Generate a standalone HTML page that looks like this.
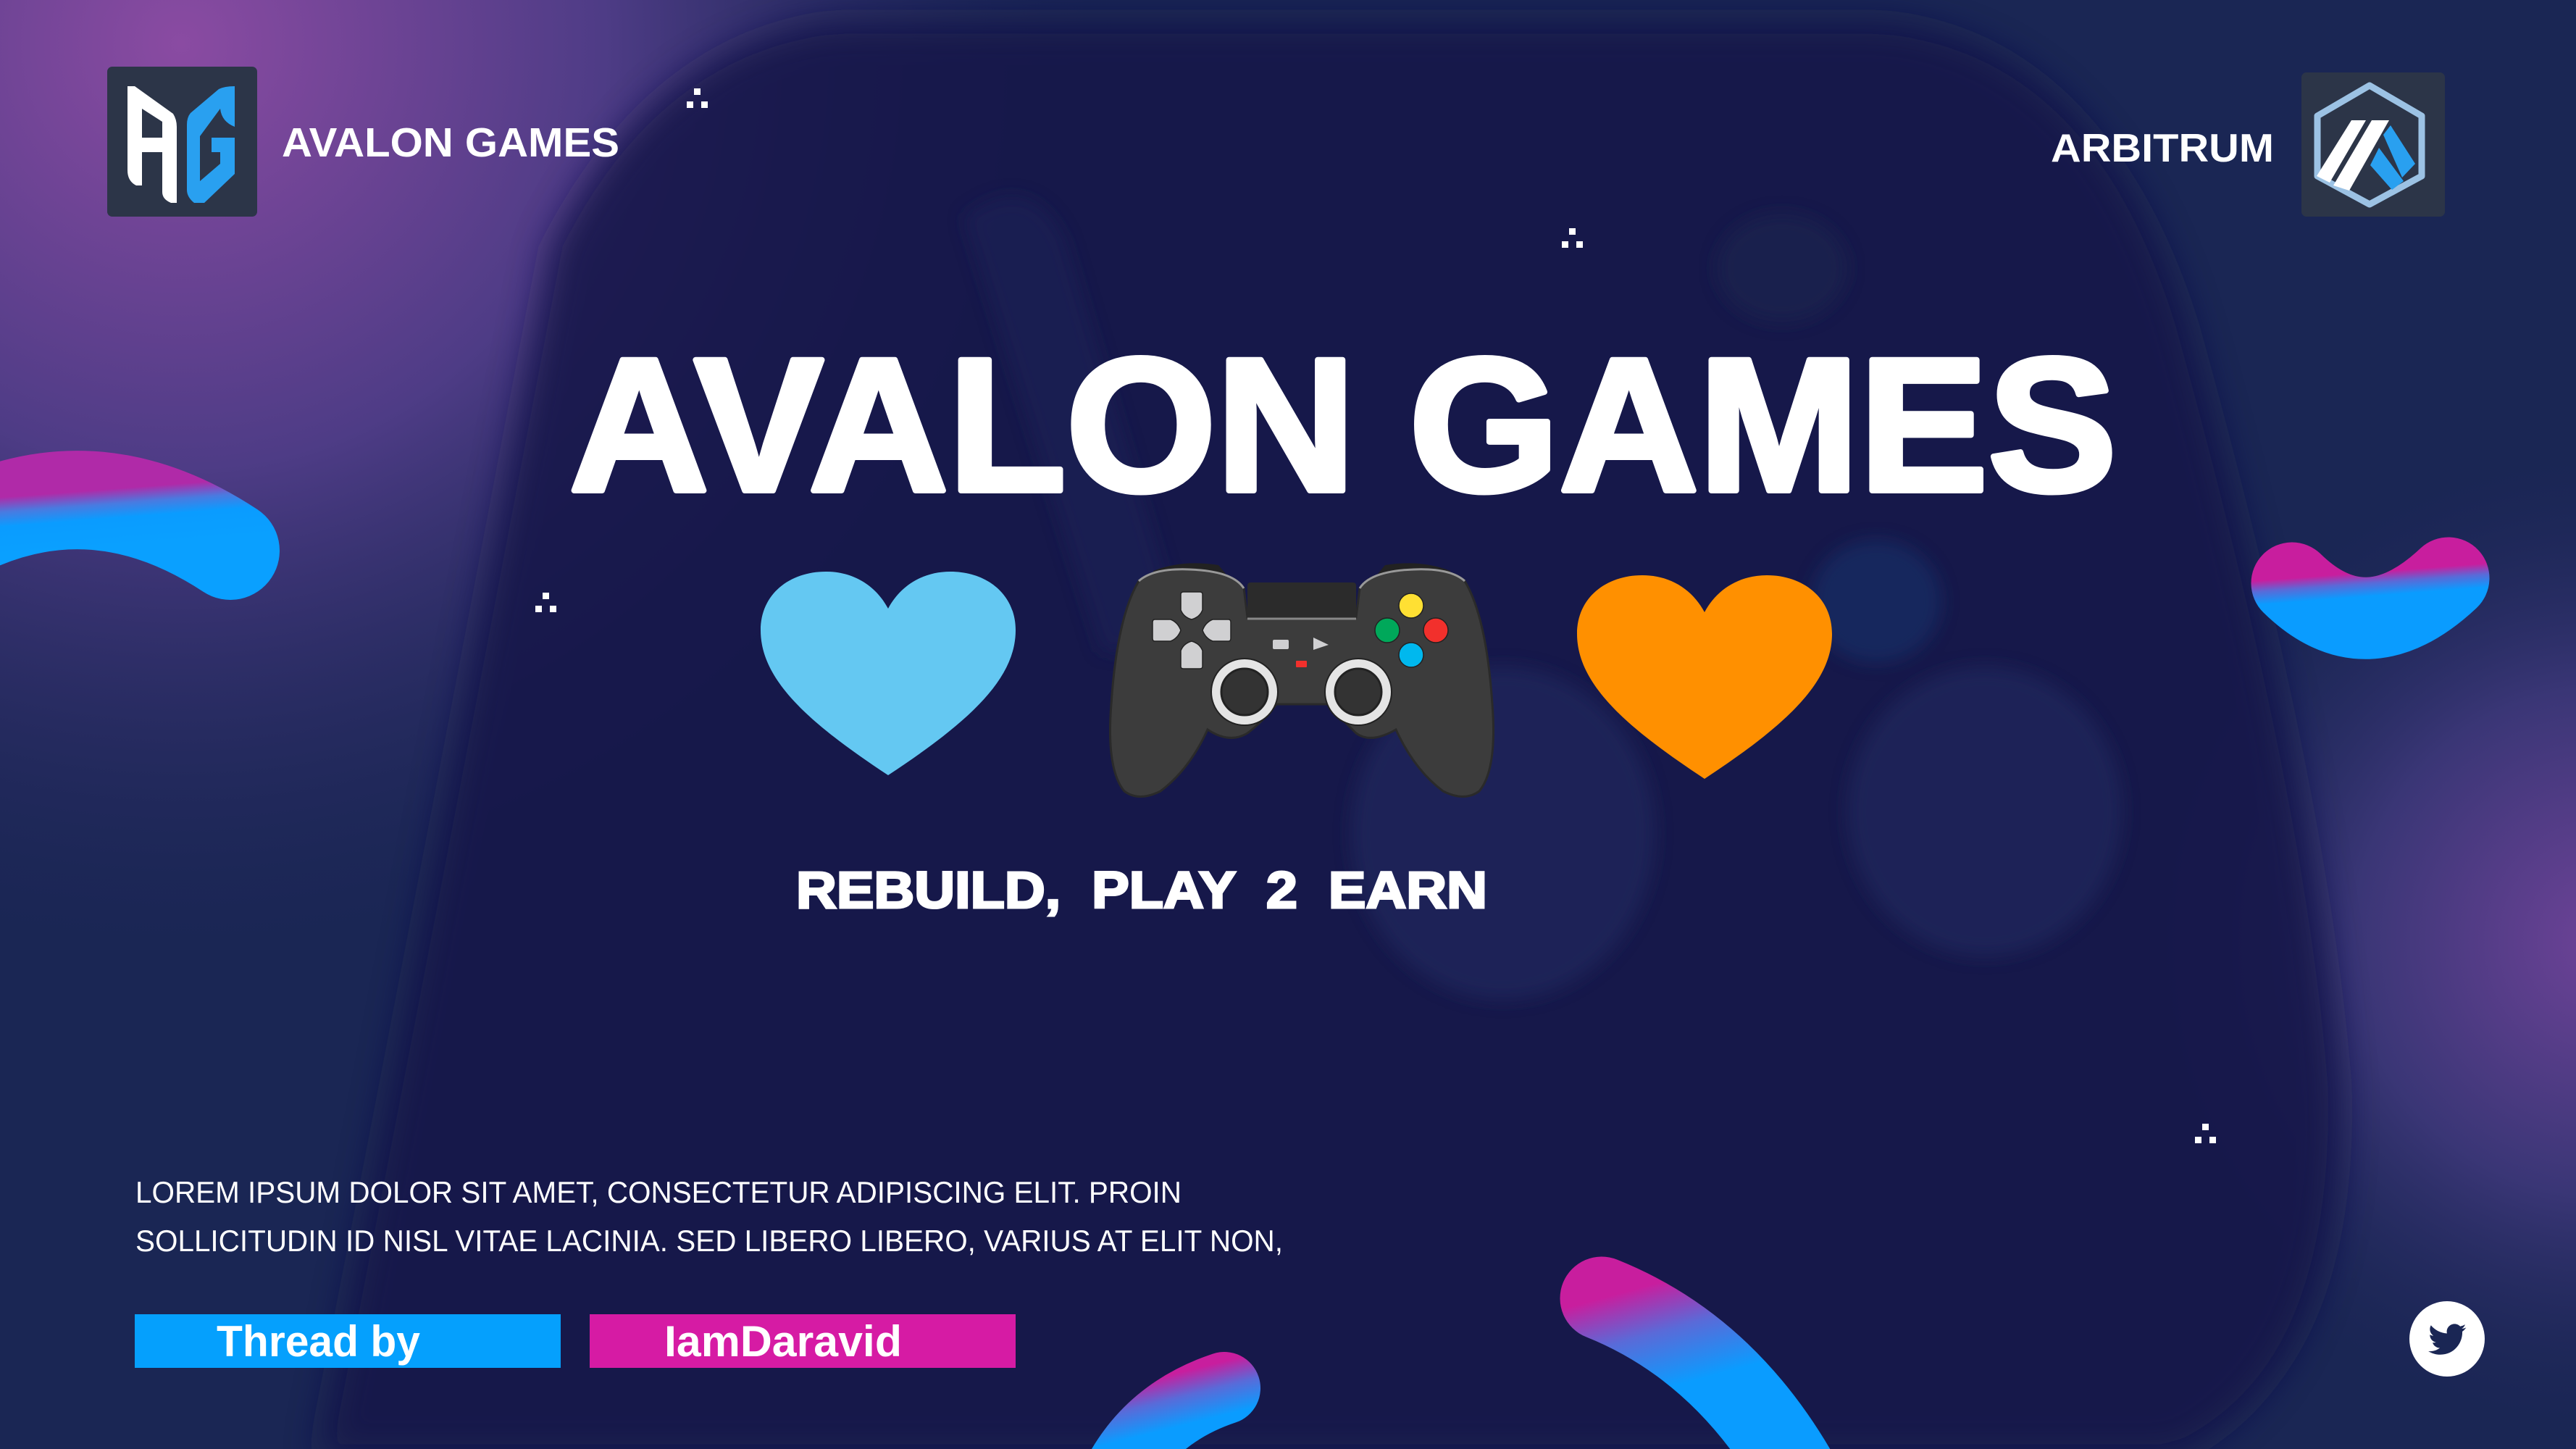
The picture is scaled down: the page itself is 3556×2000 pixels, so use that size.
<!DOCTYPE html>
<html><head><meta charset="utf-8"><style>
html,body{margin:0;padding:0;background:#161d4c;}
svg{display:block}
</style></head><body>
<svg width="3556" height="2000" viewBox="0 0 3556 2000" xmlns="http://www.w3.org/2000/svg">
<defs>
<radialGradient id="g1" cx="250" cy="60" r="1300" gradientUnits="userSpaceOnUse">
<stop offset="0" stop-color="#8a4ba2"/><stop offset="0.45" stop-color="#4e3c86"/><stop offset="1" stop-color="#1a2555" stop-opacity="0"/></radialGradient>
<radialGradient id="g2" cx="3600" cy="1300" r="700" gradientUnits="userSpaceOnUse">
<stop offset="0" stop-color="#6e4398"/><stop offset="0.5" stop-color="#3a3676"/><stop offset="1" stop-color="#1a2555" stop-opacity="0"/></radialGradient>
<linearGradient id="bl" x1="0" y1="0" x2="0.4" y2="1"><stop offset="0" stop-color="#b02aa8"/><stop offset="0.25" stop-color="#4a7ae0"/><stop offset="0.5" stop-color="#0a9cff"/><stop offset="1" stop-color="#0aa0ff"/></linearGradient>
<linearGradient id="bl2" x1="0" y1="0" x2="0.3" y2="1"><stop offset="0" stop-color="#c81e9e"/><stop offset="0.25" stop-color="#5a6ad8"/><stop offset="0.55" stop-color="#0a9cff"/><stop offset="1" stop-color="#0a9cff"/></linearGradient>
<filter id="blur" x="-10%" y="-10%" width="120%" height="120%"><feGaussianBlur stdDeviation="25"/></filter>
<filter id="blur2" x="-20%" y="-20%" width="140%" height="140%"><feGaussianBlur stdDeviation="12"/></filter>
</defs>
<rect width="3556" height="2000" fill="#1a2654"/>
<rect width="3556" height="2000" fill="url(#g1)"/>
<rect width="3556" height="2000" fill="url(#g2)"/>
<!-- faint big controller -->
<path d="M760,340 Q900,60 1150,30 L2600,30 Q2900,60 3020,450 Q3200,1100 3230,1500 Q3240,1900 3000,2010 L440,2010 Q560,1400 760,340 Z" fill="#131949" opacity="0.85" filter="url(#blur)"/>
<g filter="url(#blur2)" opacity="0.6">
<ellipse cx="2075" cy="1150" rx="210" ry="230" fill="#222a60"/>
<ellipse cx="2740" cy="1120" rx="190" ry="200" fill="#222a60"/>
<ellipse cx="2460" cy="370" rx="90" ry="75" fill="#1e2750"/>
<ellipse cx="2590" cy="830" rx="90" ry="85" fill="#17306a"/>
<path d="M1330,300 Q1420,230 1470,330 L1640,900 L1520,900 Z" fill="#1b2356"/>
</g>
<!-- blobs -->
<path d="M-45,726 Q136,640 318,760" stroke="url(#bl)" stroke-width="136" fill="none" stroke-linecap="round"/>
<path d="M3164,805 Q3266,905 3380,798" stroke="url(#bl2)" stroke-width="113" fill="none" stroke-linecap="round"/>
<path d="M2211,1792 Q2381,1860 2483,2040" stroke="url(#bl2)" stroke-width="115" fill="none" stroke-linecap="round"/>
<path d="M1690,1916 Q1588,1950 1542,2040" stroke="url(#bl2)" stroke-width="100" fill="none" stroke-linecap="round"/>
<!-- dots -->
<g fill="#fff">
<rect x="958" y="122" width="9" height="9"/><rect x="948" y="140" width="9" height="9"/><rect x="968" y="140" width="9" height="9"/>
<rect x="2166" y="315" width="9" height="9"/><rect x="2156" y="333" width="9" height="9"/><rect x="2176" y="333" width="9" height="9"/>
<rect x="749" y="818" width="9" height="9"/><rect x="739" y="836" width="9" height="9"/><rect x="759" y="836" width="9" height="9"/>
<rect x="3040" y="1551" width="9" height="9"/><rect x="3030" y="1569" width="9" height="9"/><rect x="3050" y="1569" width="9" height="9"/>
</g>
<!-- AG logo -->
<rect x="148" y="92" width="207" height="207" rx="7" fill="#2c3548"/>
<path fill-rule="evenodd" fill="#fff" d="M176,119 L186,119 L239,157 Q244,165 244,175 L244,280 L236,280 Q224,275 224,265 L224,210 L196,210 L196,256 L188,256 Q176,250 176,235 Z M196,150 L196,190 L224,190 L224,168 Z"/>
<path fill="#29a0f0" d="M324,119 L324,175 Q306,168 304,150 L276,188 L276,250 L304,226 L304,210 L292,210 L292,190 L324,190 L324,240 L282,280 L268,280 Q258,272 258,262 L258,172 Q258,162 263,156 L302,123 Q310,119 324,119 Z"/>
<text x="389" y="216" font-family="Liberation Sans, sans-serif" font-weight="bold" font-size="57" fill="#fff" textLength="466" lengthAdjust="spacingAndGlyphs">AVALON GAMES</text>
<!-- Arbitrum -->
<text x="2831" y="223" font-family="Liberation Sans, sans-serif" font-weight="bold" font-size="55" fill="#fff" textLength="308" lengthAdjust="spacingAndGlyphs">ARBITRUM</text>
<rect x="3177" y="100" width="198" height="199" rx="7" fill="#2c3548"/>
<path d="M3271,118 L3343,160 L3343,243 L3271,282 L3199,243 L3199,160 Z" fill="none" stroke="#9cc2e4" stroke-width="9" stroke-linejoin="round"/>
<path d="M3300,173 L3334,226 L3316,245 L3290,186 Z" fill="#29a0f0"/>
<path d="M3284,204 L3318,250 L3302,262 L3272,228 Z" fill="#29a0f0"/>
<path d="M3246,166 L3266,166 L3216,252 L3198,243 Z" fill="#fff"/>
<path d="M3274,166 L3298,166 L3243,263 L3221,256 Z" fill="#fff"/>
<!-- Title -->
<text x="786" y="677" font-family="Liberation Sans, sans-serif" font-weight="bold" font-size="262" fill="#fff" stroke="#fff" stroke-width="8" stroke-linejoin="round" textLength="2136" lengthAdjust="spacingAndGlyphs">AVALON GAMES</text>
<!-- hearts -->
<path d="M1226,1070 C1120,1000 1050,940 1050,870 C1050,820 1090,789 1140,789 C1180,789 1210,810 1226,840 C1242,810 1272,789 1312,789 C1362,789 1402,820 1402,870 C1402,940 1332,1000 1226,1070 Z" fill="#64c8f2"/>
<path d="M2353,1075 C2247,1005 2177,945 2177,875 C2177,825 2217,794 2267,794 C2307,794 2337,815 2353,845 C2369,815 2399,794 2439,794 C2489,794 2529,825 2529,875 C2529,945 2459,1005 2353,1075 Z" fill="#ff9000"/>
<!-- controller -->
<g transform="translate(1532,772)">
<path d="M60,16 Q100,0 150,8 L160,20 L60,26 Z M370,20 L380,8 Q430,0 470,16 L470,26 Z" fill="#222"/>
<path d="M40,30 Q60,12 110,14 Q170,16 185,40 L190,80 L340,80 L345,40 Q360,16 420,14 Q470,12 490,30 Q520,80 528,200 Q535,290 510,320 Q490,335 460,320 Q420,290 395,235 Q360,255 340,240 Q320,220 300,200 L230,200 Q210,225 190,240 Q165,255 135,235 Q110,290 70,320 Q40,335 20,320 Q-5,290 2,200 Q10,80 40,30 Z" fill="#3c3c3c" stroke="#2a2a2a" stroke-width="3"/>
<path d="M40,30 Q60,12 110,14 Q170,16 185,40" fill="none" stroke="#999" stroke-width="3"/>
<path d="M345,40 Q360,16 420,14 Q470,12 490,30" fill="none" stroke="#999" stroke-width="3"/>
<rect x="190" y="32" width="150" height="50" rx="4" fill="#2b2b2b"/>
<path d="M190,82 L340,82" stroke="#888" stroke-width="3"/>
<g fill="#d0d0d2" stroke="#222" stroke-width="1.5">
<path d="M98,48 Q98,45 102,45 L124,45 Q128,45 128,48 L128,70 Q124,80 113,83 Q102,80 98,70 Z"/>
<path d="M98,148 Q98,151 102,151 L124,151 Q128,151 128,148 L128,126 Q124,116 113,113 Q102,116 98,126 Z"/>
<path d="M62,83 Q59,83 59,87 L59,109 Q59,113 62,113 L84,113 Q94,109 98,98 Q94,87 84,83 Z"/>
<path d="M164,83 Q167,83 167,87 L167,109 Q167,113 164,113 L142,113 Q132,109 128,98 Q132,87 142,83 Z"/>
</g>
<circle cx="416" cy="64" r="17" fill="#ffe033" stroke="#222" stroke-width="1.5"/>
<circle cx="383" cy="98" r="17" fill="#00a85a" stroke="#222" stroke-width="1.5"/>
<circle cx="450" cy="98" r="17" fill="#f2302c" stroke="#222" stroke-width="1.5"/>
<circle cx="416" cy="132" r="17" fill="#00b8ee" stroke="#222" stroke-width="1.5"/>
<rect x="225" y="111" width="22" height="13" rx="2" fill="#d0d0d2"/>
<path d="M281,108 L302,118 L281,125 Z" fill="#d0d0d2"/>
<rect x="257" y="140" width="15" height="9" rx="1" fill="#f2302c"/>
<circle cx="186" cy="183" r="46" fill="#e4e4e4" stroke="#222" stroke-width="2"/>
<circle cx="186" cy="183" r="32" fill="#333" stroke="#222" stroke-width="3"/>
<circle cx="343" cy="183" r="46" fill="#e4e4e4" stroke="#222" stroke-width="2"/>
<circle cx="343" cy="183" r="32" fill="#333" stroke="#222" stroke-width="3"/>
</g>
<!-- subtitle -->
<text x="1099" y="1253" font-family="Liberation Sans, sans-serif" font-weight="bold" font-size="71" fill="#fff" stroke="#fff" stroke-width="3" textLength="954" lengthAdjust="spacingAndGlyphs" xml:space="preserve">REBUILD,  PLAY  2  EARN</text>
<!-- lorem -->
<text x="187" y="1660" font-family="Liberation Sans, sans-serif" font-size="42" fill="#fff" textLength="1444" lengthAdjust="spacingAndGlyphs">LOREM IPSUM DOLOR SIT AMET, CONSECTETUR ADIPISCING ELIT. PROIN</text>
<text x="187" y="1727" font-family="Liberation Sans, sans-serif" font-size="42" fill="#fff" textLength="1584" lengthAdjust="spacingAndGlyphs">SOLLICITUDIN ID NISL VITAE LACINIA. SED LIBERO LIBERO, VARIUS AT ELIT NON,</text>
<!-- buttons -->
<rect x="186" y="1814" width="588" height="74" fill="#05a0fd"/>
<rect x="814" y="1814" width="588" height="74" fill="#d61ba4"/>
<text x="299" y="1872" font-family="Liberation Sans, sans-serif" font-weight="bold" font-size="60" fill="#fff" textLength="281" lengthAdjust="spacingAndGlyphs">Thread by</text>
<text x="917" y="1872" font-family="Liberation Sans, sans-serif" font-weight="bold" font-size="60" fill="#fff" textLength="328" lengthAdjust="spacingAndGlyphs">IamDaravid</text>
<!-- twitter -->
<circle cx="3378" cy="1848" r="52" fill="#fff"/>
<g transform="translate(3350,1821) scale(2.3)" fill="#1a2654">
<path d="M23.643 4.937c-.835.37-1.732.62-2.675.733.962-.576 1.7-1.49 2.048-2.578-.9.534-1.897.922-2.958 1.13-.85-.904-2.06-1.47-3.4-1.470-2.572 0-4.658 2.086-4.658 4.66 0 .364.042.718.12 1.06-3.873-.195-7.304-2.05-9.602-4.868-.4.69-.63 1.49-.63 2.342 0 1.616.823 3.043 2.072 3.878-.764-.025-1.482-.234-2.11-.583v.06c0 2.257 1.605 4.14 3.737 4.568-.392.106-.803.162-1.227.162-.3 0-.593-.028-.877-.082.593 1.85 2.313 3.198 4.352 3.234-1.595 1.25-3.604 1.995-5.786 1.995-.376 0-.747-.022-1.112-.065 2.062 1.323 4.51 2.093 7.14 2.093 8.57 0 13.255-7.098 13.255-13.254 0-.2-.005-.402-.014-.602.91-.658 1.7-1.477 2.323-2.41z"/>
</g>
</svg>
</body></html>
